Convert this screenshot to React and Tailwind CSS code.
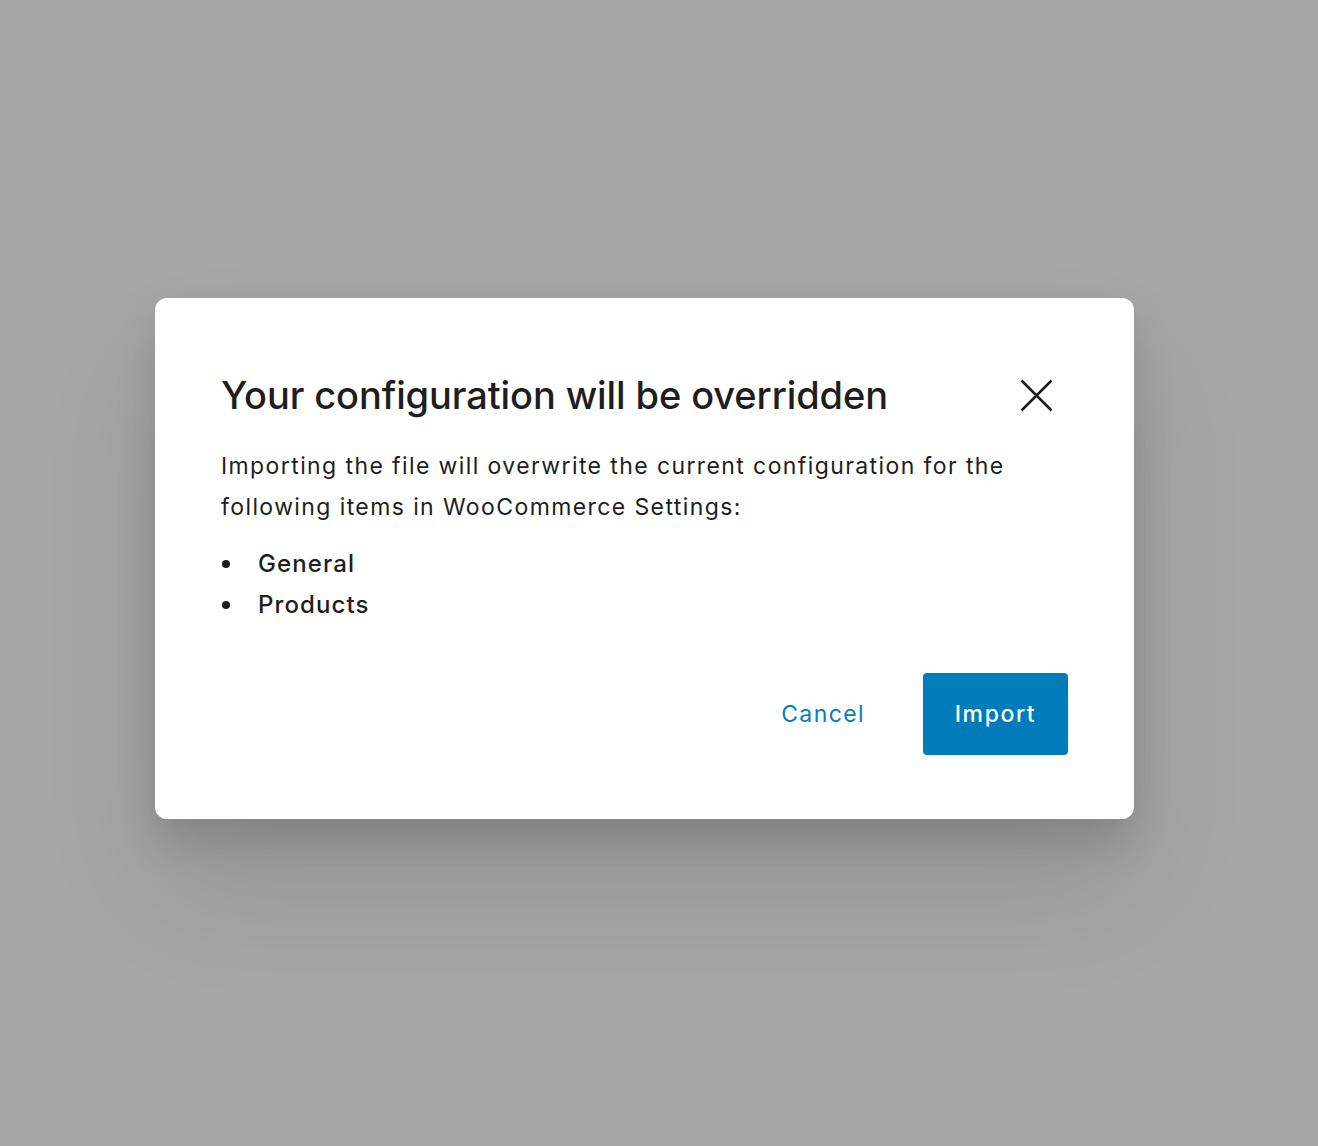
import React from "react";

const items = ["General", "Products"];

export default function App() {
  return (
    <div className="min-h-[1146px] bg-[#a6a6a6] pt-[298px] font-['Inter',sans-serif] text-[#1e1e1e]">
      <div className="ml-[155px] w-[979px] rounded-[12px] bg-white px-[66px] pt-[73px] pb-[64px] shadow-[0_24px_40px_rgba(0,0,0,0.13),0_70px_120px_rgba(0,0,0,0.1)]">
        <div className="flex items-center justify-between">
          <h1 className="text-[38px] leading-[48px] font-medium tracking-[-0.1px]">
            Your configuration will be overridden
          </h1>
          <button className="mr-[14px] flex h-[36px] w-[36px] items-center justify-center">
            <svg width="33" height="33" viewBox="0 0 33 33" fill="none">
              <path d="M1.5 1.5L31.5 31.5M31.5 1.5L1.5 31.5" stroke="#1e1e1e" strokeWidth="2.6" />
            </svg>
          </button>
        </div>
        <p className="mt-[27px] text-[23px] leading-[41px] tracking-[1.4px]">
          Importing the file will overwrite the current configuration for the
          <br />
          following items in WooCommerce Settings:
        </p>
        <ul className="mt-[15px]">
          {items.map((item) => (
            <li key={item} className="flex items-center text-[24px] leading-[41px] font-medium tracking-[1.1px]">
              <span className="mr-[28px] ml-[1px] h-[8px] w-[8px] rounded-full bg-[#1e1e1e]" />
              {item}
            </li>
          ))}
        </ul>
        <div className="mt-[48px] flex items-center justify-end">
          <button className="mr-[58px] text-[23px] tracking-[1.4px] text-[#0a7cc1]">Cancel</button>
          <button className="h-[82px] w-[145px] rounded-[4px] bg-[#007cba] text-[23px] font-medium tracking-[1.6px] text-white">
            Import
          </button>
        </div>
      </div>
    </div>
  );
}
